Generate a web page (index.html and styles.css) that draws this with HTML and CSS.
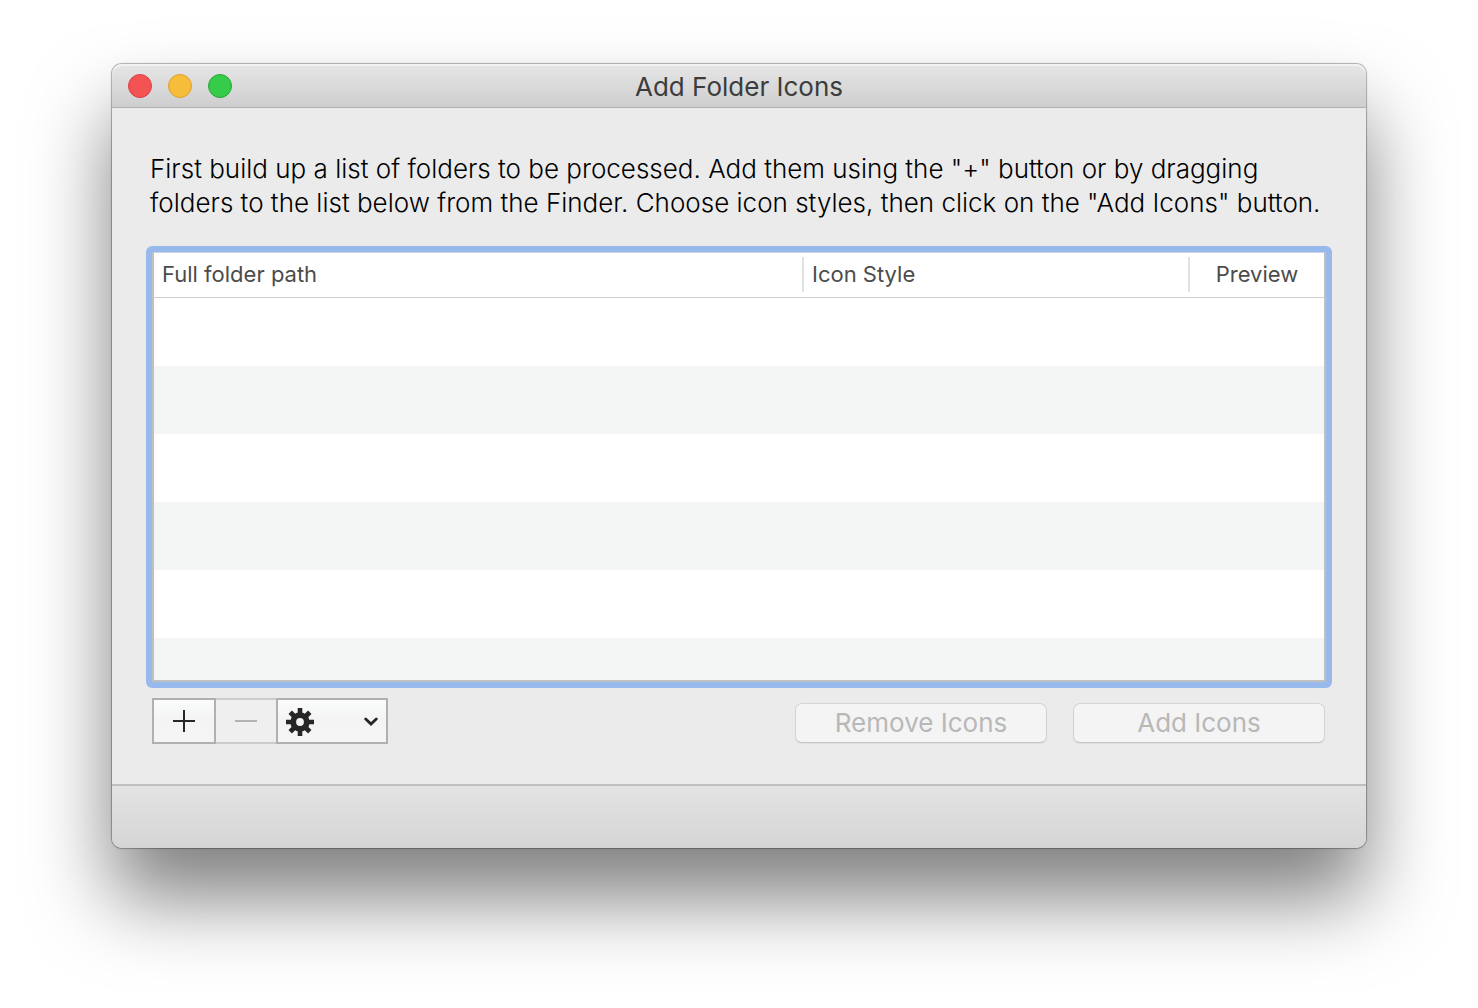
FILE: index.html
```html
<!DOCTYPE html>
<html lang="en">
<head>
<meta charset="utf-8">
<title>Add Folder Icons</title>
<link rel="stylesheet" href="styles.css">
</head>
<body>
<main class="window">
  <header class="titlebar">
    <div class="lights">
      <button class="light light-close" type="button" aria-label="Close"></button>
      <button class="light light-minimize" type="button" aria-label="Minimize"></button>
      <button class="light light-zoom" type="button" aria-label="Zoom"></button>
    </div>
    <h1 class="title">Add Folder Icons</h1>
  </header>
  <section class="content">
    <p class="intro">First build up a list of folders to be processed. Add them using the "+" button or by dragging<br>folders to the list below from the Finder. Choose icon styles, then click on the "Add Icons" button.</p>
    <div class="list" tabindex="0">
      <table class="folders">
        <colgroup><col><col class="col-style"><col class="col-preview"></colgroup>
        <thead>
          <tr><th scope="col"><span class="label">Full folder path</span></th><th scope="col"><span class="label">Icon Style</span></th><th scope="col" class="center"><span class="label">Preview</span></th></tr>
        </thead>
        <tbody>
          <tr><td colspan="3"></td></tr>
          <tr><td colspan="3"></td></tr>
          <tr><td colspan="3"></td></tr>
          <tr><td colspan="3"></td></tr>
          <tr><td colspan="3"></td></tr>
          <tr><td colspan="3"></td></tr>
        </tbody>
      </table>
    </div>
    <div class="actions">
      <div class="segments">
        <button class="segment segment-add" type="button" aria-label="Add folder">
          <svg width="22" height="22" viewBox="0 0 22 22"><path d="M11 0V22M0 11H22" stroke="#262626" stroke-width="2"/></svg>
        </button>
        <button class="segment segment-remove" type="button" aria-label="Remove folder" disabled>
          <svg width="22" height="22" viewBox="0 0 22 22"><path d="M0 11H22" stroke="#b4b4b4" stroke-width="2"/></svg>
        </button>
        <button class="segment segment-menu" type="button" aria-label="Actions" aria-haspopup="menu">
          <svg width="28" height="28" viewBox="-14 -14 28 28">
            <g stroke="#262626" stroke-width="4.6">
              <path d="M0-14V-6M0 14V6M-14 0H-6M14 0H6"/>
              <path d="M-9.8-9.8L-5-5M9.8 9.8L5 5M9.8-9.8L5-5M-9.8 9.8L-5 5" stroke-width="4.8"/>
            </g>
            <circle r="6.8" fill="none" stroke="#262626" stroke-width="5.8"/>
          </svg>
          <svg width="14" height="10" viewBox="0 0 14 10"><path d="M1.7 2L7 7L12.3 2" fill="none" stroke="#262626" stroke-width="2.8" stroke-linecap="round"/></svg>
        </button>
      </div>
      <div class="pushes">
        <button class="push" type="button" disabled>Remove Icons</button>
        <button class="push" type="button" disabled>Add Icons</button>
      </div>
    </div>
  </section>
  <footer class="bottombar"></footer>
</main>
</body>
</html>
```
FILE: styles.css
```css
* {
  box-sizing: border-box;
}

body {
  margin: 0;
  padding: 64px 112px 160px;
  background: #fff;
  color: #000;
  font-family: Inter, "Liberation Sans", sans-serif;
  font-size: 26px;
  line-height: 34px;
}

button {
  margin: 0;
  padding: 0;
  font: inherit;
}

svg {
  display: block;
}

.window {
  border-radius: 10px;
  background: #ebebeb;
  box-shadow: 0 0 1px 1px rgba(0, 0, 0, 0.3), 0 50px 80px rgba(0, 0, 0, 0.5);
}

.titlebar {
  display: grid;
  grid-template-columns: 1fr auto 1fr;
  align-items: center;
  height: 44px;
  padding: 0 16px;
  border-bottom: 1px solid #b1b1b1;
  border-radius: 10px 10px 0 0;
  background: linear-gradient(#e6e6e6, #cecece);
  box-shadow: inset 0 2px 0 #f2f2f2;
}

.lights {
  display: flex;
  gap: 16px;
}

.light {
  width: 24px;
  height: 24px;
  border: 1px solid;
  border-radius: 50%;
}

.light-close {
  border-color: #de3f46;
  background: #f45354;
}

.light-minimize {
  border-color: #dc9f2d;
  background: #f5bd3a;
}

.light-zoom {
  border-color: #2aa637;
  background: #36cb49;
}

.title {
  margin: 0;
  padding-top: 2px;
  color: #3c3c3c;
  font-size: 26px;
  font-weight: 400;
}

.content {
  padding: 44px 40px 40px;
}

.intro {
  margin: 0 -2px 32px;
  font-weight: 300;
  white-space: nowrap;
}

.list {
  height: 430px;
  overflow: hidden;
  border: 2px solid #c0c0c0;
  border-top: 1px solid #ccd3dc;
  border-radius: 2px;
  background: #fff;
  box-shadow: 0 0 0 6px #97b9ec;
}

.list,
.list:focus {
  outline: none;
}

.folders {
  width: 100%;
  border-collapse: separate;
  border-spacing: 0;
  table-layout: fixed;
}

.col-style {
  width: 386px;
}

.col-preview {
  width: 134px;
}

th {
  height: 45px;
  padding: 4px 0 5px;
  border-bottom: 1px solid #d0d0d0;
  color: #4c4c4c;
  font-size: 22px;
  font-weight: 400;
  text-align: left;
}

.label {
  display: block;
  height: 35px;
  padding: 0 8px;
  border-right: 2px solid #e2e2e2;
}

.center .label {
  border-right: 0;
  text-align: center;
}

td {
  height: 68px;
  padding: 0;
}

tbody tr:nth-child(even) {
  background: #f4f6f5;
}

.actions {
  display: flex;
  justify-content: space-between;
  align-items: center;
  margin-top: 16px;
}

.segments,
.pushes {
  display: flex;
}

.pushes {
  gap: 26px;
  padding: 4px 1px 0 0;
}

.segment {
  display: flex;
  justify-content: center;
  align-items: center;
  height: 46px;
  border: 2px solid #b0b0b0;
  border-radius: 0;
  background: linear-gradient(#fafcfb, #f3f3f3 50%, #f6f6f6);
}

.segment-add {
  width: 64px;
}

.segment-remove {
  width: 60px;
  border-width: 2px 0;
  border-color: #cccccc;
  background: #efefef;
}

.segment-menu {
  justify-content: space-between;
  width: 112px;
  padding: 2px 8px 0;
}

.push {
  width: 252px;
  height: 40px;
  border: 1px solid #d4d4d4;
  border-bottom-color: #c6c6c6;
  border-radius: 7px;
  background: #f4f4f4;
  color: #b8b8b8;
  box-shadow: 0 1px 1px rgba(0, 0, 0, 0.06);
}

.bottombar {
  height: 64px;
  border-top: 2px solid #bfbfbf;
  border-radius: 0 0 10px 10px;
  background: linear-gradient(#e3e3e3, #d5d5d5);
}
```
